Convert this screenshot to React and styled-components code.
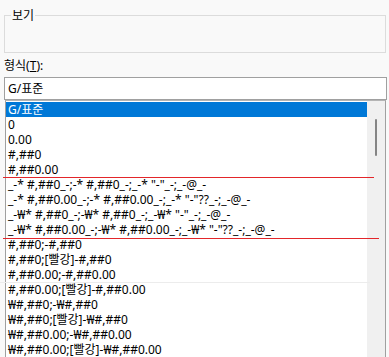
import React from 'react';
import styled, { createGlobalStyle } from 'styled-components';

const GlobalStyle = createGlobalStyle`
  html, body {
    margin: 0;
    background: #f9f9f9;
  }
  body {
    font-family: "Noto Sans", "Noto Sans CJK KR", sans-serif;
    font-size: 12px;
    color: #000;
  }
  #root {
    height: 357px;
    overflow: hidden;
  }
`;

const Dialog = styled.div`
  position: relative;
  display: flex;
  flex-direction: column;
  padding: 0 2px 0 4px;
`;

const PreviewGroup = styled.fieldset`
  margin: 8px 0 0;
  padding: 0 6px;
  border: 1px solid #dcdcdc;
  width: 382px;
  box-sizing: border-box;
`;

const Legend = styled.legend`
  padding: 0 1px;
  line-height: 15px;
`;

const PreviewArea = styled.div`
  height: 29px;
`;

const FieldLabel = styled.div`
  margin-top: 5px;
  line-height: 15px;
`;

const FormatInput = styled.div`
  margin-top: 4px;
  width: 383px;
  height: 23px;
  box-sizing: border-box;
  border: 1px solid #a0a0a0;
  background: #fff;
  padding-left: 3px;
  line-height: 21px;
`;

const ListBox = styled.div`
  margin-left: 1px;
  width: 381px;
  height: 300px;
  box-sizing: border-box;
  border: 1px solid #a0a0a0;
  border-top-color: #b4b4b4;
  background: #fff;
  display: grid;
  grid-template-columns: 1fr 18px;
`;

const Items = styled.div`
  padding-top: 1px;
  overflow: hidden;
`;

const Row = styled.div`
  height: 15px;
  line-height: 15px;
  padding-left: 2px;
  white-space: pre;
  background: ${({ selected }) => (selected ? '#0078d7' : 'transparent')};
  color: ${({ selected }) => (selected ? '#fff' : '#000')};
`;

const ScrollTrack = styled.div`
  background: #f0f0f0;
  display: flex;
  flex-direction: column;
  align-items: center;
`;

const Thumb = styled.div`
  margin-top: 18px;
  width: 2px;
  height: 37px;
  border-radius: 1px;
  background: #858585;
`;

const Mark = styled.div`
  position: absolute;
  height: 1px;
  background: ${({ color }) => color};
`;

const formats = [
  'G/표준',
  '0',
  '0.00',
  '#,##0',
  '#,##0.00',
  '_-* #,##0_-;-* #,##0_-;_-* "-"_-;_-@_-',
  '_-* #,##0.00_-;-* #,##0.00_-;_-* "-"??_-;_-@_-',
  '_-₩* #,##0_-;-₩* #,##0_-;_-₩* "-"_-;_-@_-',
  '_-₩* #,##0.00_-;-₩* #,##0.00_-;_-₩* "-"??_-;_-@_-',
  '#,##0;-#,##0',
  '#,##0;[빨강]-#,##0',
  '#,##0.00;-#,##0.00',
  '#,##0.00;[빨강]-#,##0.00',
  '₩#,##0;-₩#,##0',
  '₩#,##0;[빨강]-₩#,##0',
  '₩#,##0.00;-₩#,##0.00',
  '₩#,##0.00;[빨강]-₩#,##0.00',
];

export default function App() {
  return (
    <>
      <GlobalStyle />
      <Dialog>
        <PreviewGroup>
          <Legend>보기</Legend>
          <PreviewArea />
        </PreviewGroup>
        <FieldLabel>
          형식(<u>T</u>):
        </FieldLabel>
        <FormatInput>G/표준</FormatInput>
        <ListBox>
          <Items>
            {formats.map((f, i) => (
              <Row key={i} selected={i === 0}>
                {f}
              </Row>
            ))}
          </Items>
          <ScrollTrack>
            <Thumb />
          </ScrollTrack>
        </ListBox>
        <Mark color="#e3262a" style={{ top: 177, left: 3, width: 371 }} />
        <Mark color="#e3262a" style={{ top: 238, left: 3, width: 376 }} />
        <Mark color="#ececec" style={{ top: 282, left: 0, width: 370 }} />
      </Dialog>
    </>
  );
}
